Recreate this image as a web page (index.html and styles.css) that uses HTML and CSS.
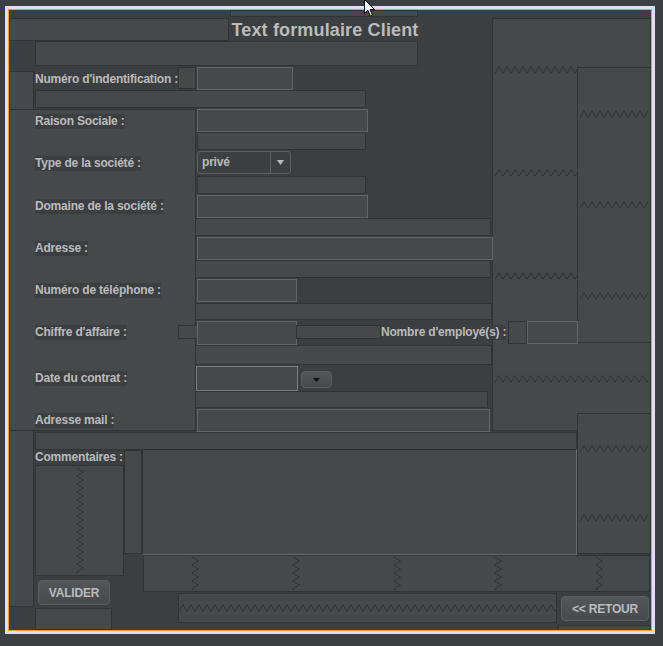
FILE: index.html
```html
<!DOCTYPE html>
<html lang="fr">
<head>
<meta charset="utf-8">
<title>Text formulaire Client</title>
<link rel="stylesheet" href="styles.css">
</head>
<body>
<svg class="defs" width="0" height="0" aria-hidden="true">
  <defs>
    <pattern id="zh" width="8" height="8" patternUnits="userSpaceOnUse">
      <path d="M0 7.5 L4 0.5 L8 7.5" fill="none" stroke="#2f3133" stroke-width="1"/>
    </pattern>
    <pattern id="zv" width="8" height="8" patternUnits="userSpaceOnUse">
      <path d="M0.5 0 L7.5 4 L0.5 8" fill="none" stroke="#2f3133" stroke-width="1"/>
    </pattern>
  </defs>
</svg>

<div class="frame">
  <div class="edge">
    <div class="canvas">
      <div class="box a-top"></div>
      <div class="box a-titleleft"></div>
      <div class="title a-title">Text formulaire Client</div>
      <div class="box a-box2"></div>
      <div class="box a-leftcol1"></div>

      <div class="box zz-col a-big">
        <div class="seg"><svg><rect width="100%" height="100%" fill="url(#zh)"/></svg></div>
        <div class="seg"><svg><rect width="100%" height="100%" fill="url(#zh)"/></svg></div>
        <div class="seg"><svg><rect width="100%" height="100%" fill="url(#zh)"/></svg></div>
        <div class="seg"><svg><rect width="100%" height="100%" fill="url(#zh)"/></svg></div>
      </div>
      <div class="box zz-col a-rinner">
        <div class="seg"><svg><rect width="100%" height="100%" fill="url(#zh)"/></svg></div>
        <div class="seg"><svg><rect width="100%" height="100%" fill="url(#zh)"/></svg></div>
        <div class="seg"><svg><rect width="100%" height="100%" fill="url(#zh)"/></svg></div>
      </div>
      <div class="box zz-col a-rlower">
        <div class="seg"><svg><rect width="100%" height="100%" fill="url(#zh)"/></svg></div>
        <div class="seg"><svg><rect width="100%" height="100%" fill="url(#zh)"/></svg></div>
      </div>

      <div class="box a-sq1"></div>
      <div class="tf a-fid"></div>
      <div class="box a-box3"></div>
      <div class="box a-panel"></div>

      <div class="tf a-fraison"></div>
      <div class="box a-b1"></div>
      <div class="combo a-combo">
        <span class="combo-text">privé</span>
        <span class="combo-arrow"><svg class="tri" width="7" height="5" viewBox="0 0 7 5"><path d="M0 0 H7 L3.5 5 Z" fill="#bbbbbb"/></svg></span>
      </div>
      <div class="box a-b2"></div>
      <div class="tf a-fdomaine"></div>
      <div class="box a-b3"></div>
      <div class="tf a-fadresse"></div>
      <div class="box a-b4"></div>
      <div class="tf a-ftel"></div>
      <div class="box a-b5"></div>
      <div class="box a-sq2"></div>
      <div class="tf a-fca"></div>
      <div class="box a-b6"></div>
      <div class="box a-sq3"></div>
      <div class="tf a-femp"></div>
      <div class="box a-b7"></div>
      <div class="tf tf-focus a-fdate"></div>
      <div class="btn a-bdate"><svg class="tri" width="7" height="4" viewBox="0 0 7 4"><path d="M0 0 H7 L3.5 4 Z" fill="#111111"/></svg></div>
      <div class="box a-b8"></div>
      <div class="tf a-fmail"></div>
      <div class="box a-b9"></div>
      <div class="box a-leftcol2"></div>

      <div class="box zz-row a-vz1">
        <div class="vseg"><svg><rect width="100%" height="100%" fill="url(#zv)"/></svg></div>
      </div>
      <div class="box a-narrow"></div>
      <div class="area a-area"></div>
      <div class="box zz-row a-vz5">
        <div class="vseg"><svg><rect width="100%" height="100%" fill="url(#zv)"/></svg></div>
        <div class="vseg"><svg><rect width="100%" height="100%" fill="url(#zv)"/></svg></div>
        <div class="vseg"><svg><rect width="100%" height="100%" fill="url(#zv)"/></svg></div>
        <div class="vseg"><svg><rect width="100%" height="100%" fill="url(#zv)"/></svg></div>
        <div class="vseg"><svg><rect width="100%" height="100%" fill="url(#zv)"/></svg></div>
      </div>
      <div class="btn a-valider">VALIDER</div>
      <div class="box a-b10"></div>
      <div class="box zz-col a-hz1">
        <div class="seg seg-tight"><svg><rect width="100%" height="100%" fill="url(#zh)"/></svg></div>
      </div>
      <div class="btn a-retour">&lt;&lt; RETOUR</div>
      <div class="box box-open a-b11"></div>

      <div class="lbl l-id">Numéro d'indentification :</div>
      <div class="lbl l-raison">Raison Sociale :</div>
      <div class="lbl l-type">Type de la société :</div>
      <div class="lbl l-domaine">Domaine de la société :</div>
      <div class="lbl l-adresse">Adresse :</div>
      <div class="lbl l-tel">Numéro de téléphone :</div>
      <div class="lbl l-ca">Chiffre d'affaire :</div>
      <div class="lbl l-date">Date du contrat :</div>
      <div class="lbl l-mail">Adresse mail :</div>
      <div class="lbl l-com">Commentaires :</div>
      <div class="lbl l-emp">Nombre d'employé(s) :</div>
    </div>
  </div>
</div>

<svg class="cursor" width="12" height="18" viewBox="0 0 12 18" aria-hidden="true">
  <path d="M0.5 0.5 V14.5 L3.9 11.2 L6.3 16.8 L8.4 15.9 L6 10.5 L10.6 10.5 Z" fill="#ffffff" stroke="#000000" stroke-width="1" stroke-linejoin="miter"/>
</svg>
</body>
</html>
```

FILE: styles.css
```css
html, body {
  margin: 0;
  padding: 0;
  background: #3c3f41;
}

body {
  width: 663px;
  height: 646px;
  overflow: hidden;
  font-family: "Liberation Sans", Arial, sans-serif;
}

.defs {
  display: block;
  width: 0;
  height: 0;
  overflow: hidden;
}

.frame {
  margin: 6px 0 0 5px;
  width: 650px;
  height: 628px;
  box-sizing: border-box;
  border: 3px solid #dedef6;
}

.edge {
  border: 1px solid #f4a31c;
  height: 620px;
  width: 642px;
}

.canvas {
  display: grid;
  grid-template-columns: repeat(642, 1px);
  grid-template-rows: repeat(620, 1px);
  width: 642px;
  height: 620px;
  background: #3c3f41;
  overflow: hidden;
}

/* generic components */
.box {
  box-sizing: border-box;
  background: #45494a;
  border: 1px solid #313335;
  min-width: 0;
  min-height: 0;
}

.box-open {
  border-bottom: none;
}

.tf {
  box-sizing: border-box;
  background: #45494a;
  border: 1px solid #646464;
}

.tf-focus {
  border-color: #7d7d7d;
}

.area {
  box-sizing: border-box;
  background: #45494a;
  border: 1px solid;
  border-color: #2e3032 #6a6a6a #6a6a6a #2e3032;
}

.title {
  font-weight: bold;
  font-size: 18px;
  letter-spacing: 0.15px;
  line-height: 22px;
  color: #bbbbbb;
  text-align: center;
  white-space: nowrap;
}

.lbl {
  justify-self: start;
  font-weight: bold;
  font-size: 12px;
  letter-spacing: -0.2px;
  line-height: 15px;
  color: #bbbbbb;
  background: #3c3f41;
  white-space: nowrap;
}

.combo {
  box-sizing: border-box;
  display: flex;
  border: 1px solid #5e6060;
  border-radius: 3px;
  background: #3d4042;
}

.combo-text {
  flex: 1;
  padding-left: 4px;
  font-weight: bold;
  font-size: 12px;
  letter-spacing: -0.2px;
  line-height: 21px;
  color: #bbbbbb;
}

.combo-arrow {
  width: 19px;
  border-left: 1px solid #5e6060;
  display: flex;
  align-items: center;
  justify-content: center;
}

.tri {
  display: block;
}

.btn {
  box-sizing: border-box;
  display: flex;
  align-items: center;
  justify-content: center;
  border: 1px solid #5a5e61;
  border-radius: 4px;
  background: linear-gradient(#52565a, #474b4e);
  color: #bbbbbb;
  font-weight: bold;
  font-size: 12px;
  letter-spacing: -0.2px;
  white-space: nowrap;
}

/* spring / filler boxes */
.zz-col {
  display: flex;
  flex-direction: column;
}

.seg {
  flex: 1;
  display: flex;
  align-items: center;
  padding: 0 2px;
  min-height: 0;
}

.seg-tight {
  padding: 0;
}

.seg svg {
  display: block;
  width: 100%;
  height: 8px;
}

.zz-row {
  display: flex;
}

.vseg {
  flex: 1;
  display: flex;
  justify-content: center;
  padding: 1px 0;
}

.vseg svg {
  display: block;
  width: 8px;
  height: 100%;
}

.a-vz1 .vseg {
  padding: 2px 0;
}

/* placements on the layout-designer canvas (row / col / row-end / col-end) */
.a-top       { grid-area: 1 / 222 / 8 / 410; }
.a-titleleft { grid-area: 9 / 1 / 32 / 221; }
.a-title     { grid-area: 10 / 221 / 32 / 413; }
.a-box2      { grid-area: 32 / 27 / 57 / 410; }
.a-leftcol1  { grid-area: 62 / 1 / 101 / 26; }
.a-big       { grid-area: 9 / 484 / 422 / 643; }
.a-rinner    { grid-area: 58 / 569 / 334 / 643; }
.a-rlower    { grid-area: 404 / 569 / 545 / 643; }
.a-sq1       { grid-area: 58 / 170 / 80 / 188; }
.a-fid       { grid-area: 58 / 189 / 81 / 285; }
.a-box3      { grid-area: 81 / 27 / 99 / 358; }
.a-panel     { grid-area: 100 / 1 / 422 / 188; }
.a-fraison   { grid-area: 100 / 189 / 123 / 360; }
.a-b1        { grid-area: 123 / 189 / 141 / 358; }
.a-combo     { grid-area: 142 / 189 / 165 / 283; }
.a-b2        { grid-area: 167 / 189 / 185 / 358; }
.a-fdomaine  { grid-area: 186 / 189 / 209 / 360; }
.a-b3        { grid-area: 209 / 187 / 227 / 483; }
.a-fadresse  { grid-area: 228 / 189 / 251 / 485; }
.a-b4        { grid-area: 251 / 187 / 269 / 483; }
.a-ftel      { grid-area: 270 / 189 / 293 / 289; }
.a-b5        { grid-area: 294 / 187 / 311 / 484; }
.a-sq2       { grid-area: 316 / 170 / 330 / 190; }
.a-fca       { grid-area: 312 / 189 / 336 / 289; }
.a-b6        { grid-area: 316 / 288 / 330 / 373; }
.a-sq3       { grid-area: 312 / 500 / 335 / 519; }
.a-femp      { grid-area: 312 / 519 / 335 / 570; }
.a-b7        { grid-area: 336 / 187 / 356 / 484; }
.a-fdate     { grid-area: 357 / 188 / 382 / 290; }
.a-bdate     { grid-area: 362 / 293 / 379 / 324; }
.a-b8        { grid-area: 382 / 187 / 399 / 480; }
.a-fmail     { grid-area: 400 / 189 / 423 / 482; }
.a-b9        { grid-area: 423 / 27 / 441 / 569; }
.a-leftcol2  { grid-area: 421 / 1 / 598 / 26; }
.a-vz1       { grid-area: 456 / 27 / 567 / 116; }
.a-narrow    { grid-area: 441 / 116 / 545 / 134; }
.a-area      { grid-area: 440 / 134 / 546 / 569; }
.a-vz5       { grid-area: 546 / 135 / 583 / 642; }
.a-valider   { grid-area: 571 / 30 / 596 / 102; }
.a-b10       { grid-area: 599 / 27 / 621 / 104; }
.a-hz1       { grid-area: 584 / 170 / 614 / 549; }
.a-retour    { grid-area: 587 / 553 / 612 / 641; }
.a-b11       { grid-area: 616 / 550 / 621 / 642; }

.l-id      { grid-area: 63 / 27 / 78 / 227; }
.l-raison  { grid-area: 105 / 27 / 120 / 227; }
.l-type    { grid-area: 147 / 27 / 162 / 227; }
.l-domaine { grid-area: 190 / 27 / 205 / 227; }
.l-adresse { grid-area: 232 / 27 / 247 / 227; }
.l-tel     { grid-area: 274 / 27 / 289 / 227; }
.l-ca      { grid-area: 316 / 27 / 331 / 227; }
.l-date    { grid-area: 362 / 27 / 377 / 227; }
.l-mail    { grid-area: 404 / 27 / 419 / 227; }
.l-com     { grid-area: 441 / 27 / 456 / 227; }
.l-emp     { grid-area: 316 / 373 / 331 / 573; }

.cursor {
  position: absolute;
  left: 364px;
  top: -1px;
}
```
